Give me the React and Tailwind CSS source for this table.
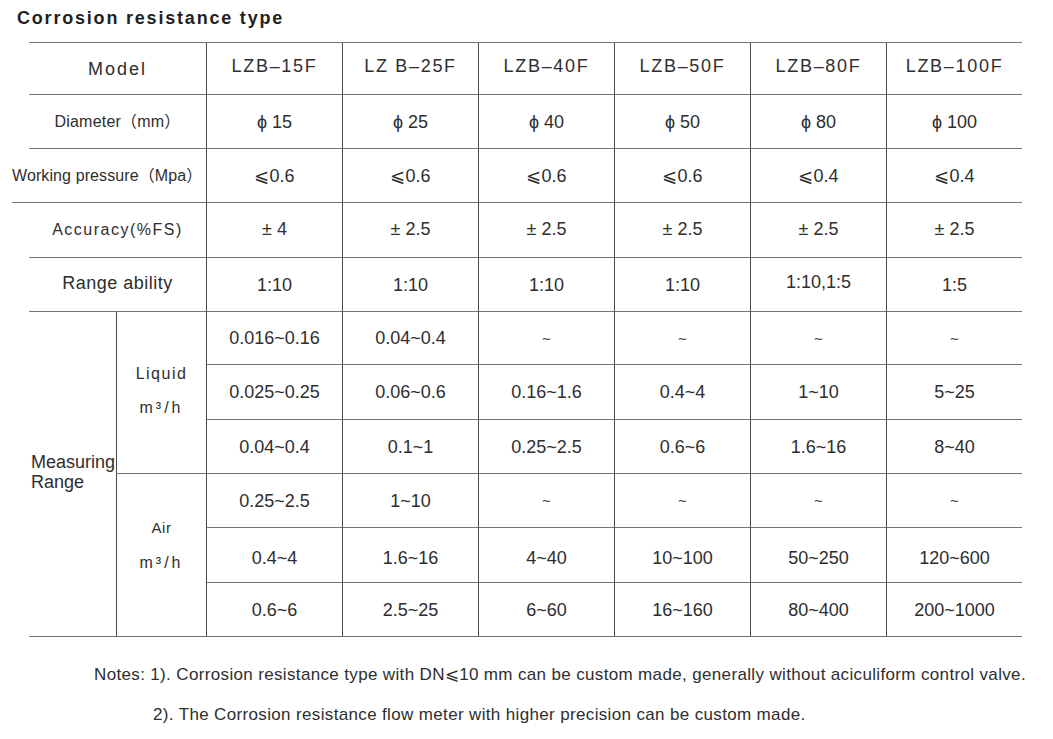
import React from "react";

const headers = ["LZB–15F", "LZ B–25F", "LZB–40F", "LZB–50F", "LZB–80F", "LZB–100F"];
const diameter = ["ϕ 15", "ϕ 25", "ϕ 40", "ϕ 50", "ϕ 80", "ϕ 100"];
const pressure = ["⩽0.6", "⩽0.6", "⩽0.6", "⩽0.6", "⩽0.4", "⩽0.4"];
const accuracy = ["± 4", "± 2.5", "± 2.5", "± 2.5", "± 2.5", "± 2.5"];
const rangeAbility = ["1:10", "1:10", "1:10", "1:10", "1:10,1:5", "1:5"];
const liquid = [
  ["0.016~0.16", "0.04~0.4", "~", "~", "~", "~"],
  ["0.025~0.25", "0.06~0.6", "0.16~1.6", "0.4~4", "1~10", "5~25"],
  ["0.04~0.4", "0.1~1", "0.25~2.5", "0.6~6", "1.6~16", "8~40"],
];
const air = [
  ["0.25~2.5", "1~10", "~", "~", "~", "~"],
  ["0.4~4", "1.6~16", "4~40", "10~100", "50~250", "120~600"],
  ["0.6~6", "2.5~25", "6~60", "16~160", "80~400", "200~1000"],
];

function Cell({ children, className = "" }) {
  const small = children === "~";
  return (
    <div
      className={`flex items-center justify-center border-b border-l border-b-[#767676] border-l-[#4a4a4a] ${
        small ? "text-[15px]" : "text-[18px]"
      } ${className}`}
    >
      {children}
    </div>
  );
}

function Label({ children, className = "" }) {
  return (
    <div
      className={`col-span-2 flex items-center justify-center border-b border-b-[#767676] ${className}`}
    >
      {children}
    </div>
  );
}

export default function App() {
  return (
    <div className="w-[1053px] h-[739px] bg-white text-[#2e2e2e] font-['Liberation_Sans','Noto_Sans_CJK_SC',sans-serif] overflow-hidden">
      <div className="pl-[17px] pt-[6px] leading-[24px] text-[18px] font-bold tracking-[1.8px] text-[#1f1f1f]">
        Corrosion resistance type
      </div>
      <div className="mt-[12px] ml-[29px] w-[993px] grid grid-cols-[87px_90px_repeat(6,136px)] grid-rows-[52px_54px_54px_55px_54px_53px_55px_54px_54px_55px_54px] border-t border-t-[#767676] leading-none">
        <Label className="text-[18px] tracking-[2px]">Model</Label>
        {headers.map((h) => (
          <Cell key={h} className="tracking-[1.7px] pb-[5px]">
            {h}
          </Cell>
        ))}

        <Label className="text-[16px] tracking-[0.2px]">Diameter（mm）</Label>
        {diameter.map((v, i) => (
          <Cell key={i}>{v}</Cell>
        ))}

        <Label className="text-[16px] tracking-[0.1px] justify-start -ml-[17px]">
          Working pressure（Mpa）
        </Label>
        {pressure.map((v, i) => (
          <Cell key={i}>{v}</Cell>
        ))}

        <Label className="text-[16px] tracking-[1.5px]">Accuracy(%FS)</Label>
        {accuracy.map((v, i) => (
          <Cell key={i} className="pb-[3px]">{v}</Cell>
        ))}

        <Label className="text-[18px] tracking-[0.5px] pb-[4px]">Range ability</Label>
        {rangeAbility.map((v, i) => (
          <Cell key={i} className={v === "1:10,1:5" ? "pb-[6px]" : ""}>
            {v}
          </Cell>
        ))}

        <div className="row-span-6 flex flex-col justify-center pl-[2px] pb-[4px] border-b border-b-[#767676] text-[18px] leading-[20px]">
          <span>Measuring</span>
          <span>Range</span>
        </div>
        <div className="row-span-3 flex flex-col items-center justify-center gap-[18px] pb-[4px] border-b border-l border-b-[#767676] border-l-[#4a4a4a] text-[16px] tracking-[1.5px]">
          <span>Liquid</span>
          <span className="tracking-[3px]">m³/h</span>
        </div>
        {liquid[0].map((v, i) => (
          <Cell key={"l0" + i}>{v}</Cell>
        ))}
        {liquid[1].map((v, i) => (
          <Cell key={"l1" + i}>{v}</Cell>
        ))}
        {liquid[2].map((v, i) => (
          <Cell key={"l2" + i}>{v}</Cell>
        ))}

        <div className="row-span-3 flex flex-col items-center justify-center gap-[20px] pb-[20px] border-b border-l border-b-[#767676] border-l-[#4a4a4a] text-[15px] tracking-[0.5px]">
          <span>Air</span>
          <span className="tracking-[3px] text-[16px]">m³/h</span>
        </div>
        {air[0].map((v, i) => (
          <Cell key={"a0" + i}>{v}</Cell>
        ))}
        {air[1].map((v, i) => (
          <Cell key={"a1" + i} className="pt-[6px]">{v}</Cell>
        ))}
        {air[2].map((v, i) => (
          <Cell key={"a2" + i}>{v}</Cell>
        ))}
      </div>

      <div className="mt-[28px] text-[17px] tracking-[0.35px] leading-[20px] text-[#2e2e2e]">
        <div className="pl-[94px]">
          Notes: 1). Corrosion resistance type with DN⩽10 mm can be custom made, generally without aciculiform control valve.
        </div>
        <div className="pl-[153px] mt-[20px]">
          2). The Corrosion resistance flow meter with higher precision can be custom made.
        </div>
      </div>
    </div>
  );
}
